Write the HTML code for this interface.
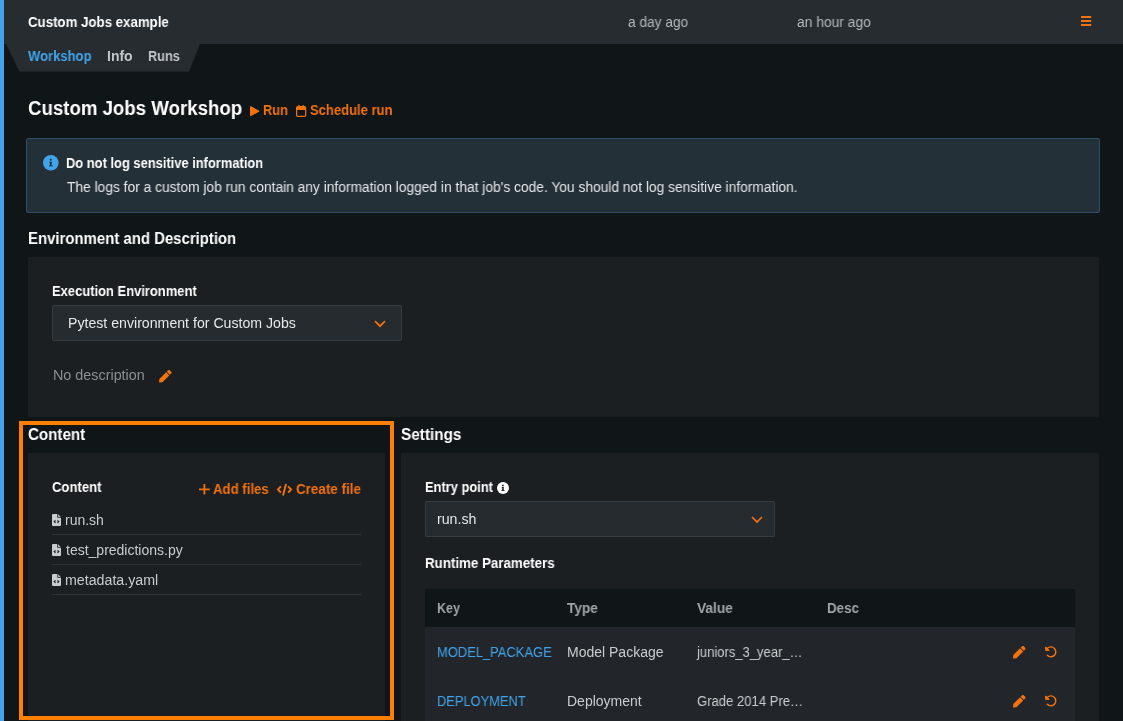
<!DOCTYPE html>
<html><head><meta charset="utf-8">
<style>
*{box-sizing:border-box;margin:0;padding:0}
html,body{width:1123px;height:721px;overflow:hidden;background:#101618}
body{font-family:"Liberation Sans",sans-serif;font-size:14px;color:#fff;position:relative}
.abs{position:absolute}
.t{position:absolute;white-space:nowrap;line-height:20px;height:20px;transform-origin:0 0;will-change:transform}
.b{font-weight:bold}
svg{position:absolute;overflow:visible}
</style></head><body>
<!-- left blue bar -->
<div class="abs" style="left:0;top:0;width:4px;height:721px;background:#41a4ea"></div>
<!-- header -->
<div class="abs" style="left:4px;top:0;width:1119px;height:44px;background:#272c31"></div>
<svg style="left:0;top:44px" width="210" height="28"><polygon points="4,0 200,0 189,27.5 19.5,27.5 6,0" fill="#272c31"/></svg>
<svg style="left:1081px;top:16px" width="10" height="10"><g fill="#f3720c"><rect x="0" y="0" width="10.2" height="2"/><rect x="0" y="4" width="10.2" height="2"/><rect x="0" y="8" width="10.2" height="2"/></g></svg>
<!-- run / schedule icons -->
<svg style="left:250px;top:105.8px" width="10" height="11"><polygon points="0.7,0.9 8.5,5.15 0.7,9.4" fill="#f3720c" stroke="#f3720c" stroke-width="1.4" stroke-linejoin="round"/></svg>
<svg style="left:296px;top:105px" width="10.3" height="12" viewBox="0 0 10.3 12"><rect x="0.6" y="1.7" width="9.1" height="9.7" rx="1.2" fill="none" stroke="#f3720c" stroke-width="1.2"/><path d="M0.6 5V2.9a1.2 1.2 0 0 1 1.2-1.2h6.7a1.2 1.2 0 0 1 1.2 1.2V5z" fill="#f3720c"/><rect x="2.3" y="0" width="1.5" height="2.4" rx="0.5" fill="#f3720c"/><rect x="6.5" y="0" width="1.5" height="2.4" rx="0.5" fill="#f3720c"/></svg>
<!-- info box -->
<div class="abs" style="left:26px;top:138px;width:1074px;height:75px;background:#243038;border:1px solid #2d4e66;border-radius:2px"></div>
<svg style="left:42.7px;top:155.2px" width="15.6" height="15.6" viewBox="0 0 15.6 15.6"><circle cx="7.8" cy="7.8" r="7.8" fill="#41a4ea"/><g fill="#253037"><circle cx="7.7" cy="4.8" r="1.05"/><rect x="6.3" y="6.8" width="2.4" height="1"/><rect x="6.9" y="6.8" width="1.8" height="4"/><rect x="6.1" y="10.3" width="3.5" height="1.1"/></g></svg>
<!-- env -->
<div class="abs" style="left:28px;top:257px;width:1071px;height:160px;background:#1b1f22;border-radius:2px"></div>
<div class="abs" style="left:52px;top:305px;width:350px;height:36px;background:#262b2f;border:1px solid #363b3f;border-radius:2px"></div>
<svg style="left:374px;top:320px" width="12" height="8"><polyline points="1,1.2 6,6.2 11,1.2" fill="none" stroke="#f3720c" stroke-width="1.7"/></svg>
<svg style="left:158.7px;top:369.8px" width="12.6" height="12.5" viewBox="0 0 512 512"><path d="M290.74 93.24l128.02 128.02-277.99 277.99-114.14 12.6C11.35 513.54-1.56 500.62.14 485.34l12.7-114.22 277.9-277.88zm207.2-19.06l-60.11-60.11c-18.75-18.75-49.16-18.75-67.91 0l-56.55 56.55 128.02 128.02 56.55-56.55c18.75-18.76 18.75-49.16 0-67.91z" fill="#f3720c"/></svg>
<!-- content / settings panels -->
<div class="abs" style="left:28px;top:453px;width:357px;height:280px;background:#1b1f22;border-radius:2px"></div>
<div class="abs" style="left:401px;top:453px;width:698px;height:280px;background:#1b1f22;border-radius:2px"></div>
<div class="abs" style="left:19px;top:420.5px;width:375px;height:299.5px;border:4px solid #ff8000"></div>
<!-- add files / create file icons -->
<svg style="left:199px;top:483.7px" width="11" height="11"><path d="M5.4 0v10.6M0 5.3h10.8" stroke="#f3720c" stroke-width="1.8" fill="none"/></svg>
<svg style="left:277px;top:484px" width="15" height="11" viewBox="0 0 15 11"><path d="M3.9 2.3L0.9 5.5l3 3.2M11.1 2.3l3 3.2-3 3.2M9 0L6 11.6" stroke="#f3720c" stroke-width="1.9" fill="none"/></svg>
<!-- file rows -->
<svg style="left:52px;top:514.3px" width="9" height="12" viewBox="0 0 9 12"><path d="M1 0h4.8L9 3.2V11a1 1 0 0 1-1 1H1a1 1 0 0 1-1-1V1a1 1 0 0 1 1-1z" fill="#c9cccf"/><path d="M5.6 0v3.4H9" fill="none" stroke="#1b1f22" stroke-width="0.8"/><path d="M3.5 6.5L2.3 7.6l1.2 1.1M5.5 6.5L6.7 7.6 5.5 8.7" fill="none" stroke="#1b1f22" stroke-width="1.2"/></svg>
<svg style="left:52px;top:544.3px" width="9" height="12" viewBox="0 0 9 12"><path d="M1 0h4.8L9 3.2V11a1 1 0 0 1-1 1H1a1 1 0 0 1-1-1V1a1 1 0 0 1 1-1z" fill="#c9cccf"/><path d="M5.6 0v3.4H9" fill="none" stroke="#1b1f22" stroke-width="0.8"/><path d="M3.5 6.5L2.3 7.6l1.2 1.1M5.5 6.5L6.7 7.6 5.5 8.7" fill="none" stroke="#1b1f22" stroke-width="1.2"/></svg>
<svg style="left:52px;top:574.3px" width="9" height="12" viewBox="0 0 9 12"><path d="M1 0h4.8L9 3.2V11a1 1 0 0 1-1 1H1a1 1 0 0 1-1-1V1a1 1 0 0 1 1-1z" fill="#c9cccf"/><path d="M5.6 0v3.4H9" fill="none" stroke="#1b1f22" stroke-width="0.8"/><path d="M3.5 6.5L2.3 7.6l1.2 1.1M5.5 6.5L6.7 7.6 5.5 8.7" fill="none" stroke="#1b1f22" stroke-width="1.2"/></svg>
<div class="abs" style="left:52px;top:534px;width:309px;height:1px;background:#2e3338"></div>
<div class="abs" style="left:52px;top:564px;width:309px;height:1px;background:#2e3338"></div>
<div class="abs" style="left:52px;top:594px;width:309px;height:1px;background:#2e3338"></div>
<!-- settings -->
<svg style="left:497px;top:481.9px" width="12" height="12" viewBox="0 0 12 12"><circle cx="6" cy="6" r="6" fill="#fff"/><g fill="#1b1f22"><circle cx="5.9" cy="3.5" r="0.9"/><rect x="4.7" y="5.2" width="2" height="0.9"/><rect x="5.2" y="5.2" width="1.5" height="3.4"/><rect x="4.5" y="8" width="3" height="0.9"/></g></svg>
<div class="abs" style="left:425px;top:501px;width:350px;height:36px;background:#262b2f;border:1px solid #363b3f;border-radius:2px"></div>
<svg style="left:751px;top:516px" width="12" height="8"><polyline points="1,1 6,6 11,1" fill="none" stroke="#f3720c" stroke-width="1.7"/></svg>
<div class="abs" style="left:425px;top:589px;width:650px;height:38px;background:#101618"></div>
<div class="abs" style="left:425px;top:627px;width:650px;height:100px;background:#22262a"></div>
<svg style="left:1012.7px;top:645.8px" width="12.5" height="12.5" viewBox="0 0 512 512"><path d="M290.74 93.24l128.02 128.02-277.99 277.99-114.14 12.6C11.35 513.54-1.56 500.62.14 485.34l12.7-114.22 277.9-277.88zm207.2-19.06l-60.11-60.11c-18.75-18.75-49.16-18.75-67.91 0l-56.55 56.55 128.02 128.02 56.55-56.55c18.75-18.76 18.75-49.16 0-67.91z" fill="#f3720c"/></svg><svg style="left:1044.8px;top:646.3px" width="11.6" height="11.6" viewBox="0 0 512 512"><path d="M106 99 A219 219 0 1 1 101 411" fill="none" stroke="#f3720c" stroke-width="64" stroke-linecap="round"/><path d="M30 40 L30 194 L184 194 Z" fill="#f3720c" stroke="#f3720c" stroke-width="44" stroke-linejoin="round"/></svg>
<svg style="left:1012.7px;top:694.8px" width="12.5" height="12.5" viewBox="0 0 512 512"><path d="M290.74 93.24l128.02 128.02-277.99 277.99-114.14 12.6C11.35 513.54-1.56 500.62.14 485.34l12.7-114.22 277.9-277.88zm207.2-19.06l-60.11-60.11c-18.75-18.75-49.16-18.75-67.91 0l-56.55 56.55 128.02 128.02 56.55-56.55c18.75-18.76 18.75-49.16 0-67.91z" fill="#f3720c"/></svg><svg style="left:1044.8px;top:695.3px" width="11.6" height="11.6" viewBox="0 0 512 512"><path d="M106 99 A219 219 0 1 1 101 411" fill="none" stroke="#f3720c" stroke-width="64" stroke-linecap="round"/><path d="M30 40 L30 194 L184 194 Z" fill="#f3720c" stroke="#f3720c" stroke-width="44" stroke-linejoin="round"/></svg>
<!-- texts -->
<div class="t b" style="left:27.83px;top:12px;color:#ffffff;transform:scaleX(0.9473)">Custom Jobs example</div>
<div class="t" style="left:627.67px;top:12px;color:#b4b8bb;transform:scaleX(0.9764)">a day ago</div>
<div class="t" style="left:796.58px;top:12px;color:#b4b8bb;transform:scaleX(0.9884)">an hour ago</div>
<div class="t b" style="left:27.65px;top:46px;color:#41a4ea;transform:scaleX(0.9303)">Workshop</div>
<div class="t b" style="left:106.68px;top:46px;color:#c3c6c8;transform:scaleX(0.9979)">Info</div>
<div class="t b" style="left:147.63px;top:46px;color:#c3c6c8;transform:scaleX(0.9084)">Runs</div>
<div class="t b" style="left:27.84px;top:96px;color:#ffffff;transform:scaleX(0.9324);font-size:20px;line-height:24px;height:24px">Custom Jobs Workshop</div>
<div class="t b" style="left:262.67px;top:100px;color:#f3720c;transform:scaleX(0.9135)">Run</div>
<div class="t b" style="left:309.55px;top:100px;color:#f3720c;transform:scaleX(0.9299)">Schedule run</div>
<div class="t b" style="left:65.61px;top:153px;color:#ffffff;transform:scaleX(0.9217)">Do not log sensitive information</div>
<div class="t" style="left:66.74px;top:177px;color:#e6e8e9;transform:scaleX(0.9846)">The logs for a custom job run contain any information logged in that job's code. You should not log sensitive information.</div>
<div class="t b" style="left:27.71px;top:229px;color:#ffffff;transform:scaleX(0.9331);font-size:16px">Environment and Description</div>
<div class="t b" style="left:51.51px;top:281px;color:#ffffff;transform:scaleX(0.9254)">Execution Environment</div>
<div class="t" style="left:67.74px;top:313px;color:#e6e8e9;transform:scaleX(1.0100)">Pytest environment for Custom Jobs</div>
<div class="t" style="left:53.27px;top:365px;color:#8b9094;transform:scaleX(1.0254)">No description</div>
<div class="t b" style="left:27.71px;top:425px;color:#ffffff;transform:scaleX(0.9478);font-size:16px">Content</div>
<div class="t b" style="left:400.63px;top:425px;color:#ffffff;transform:scaleX(0.9563);font-size:16px">Settings</div>
<div class="t b" style="left:51.84px;top:477px;color:#ffffff;transform:scaleX(0.9342)">Content</div>
<div class="t b" style="left:212.60px;top:479px;color:#f3720c;transform:scaleX(0.9423)">Add files</div>
<div class="t b" style="left:295.74px;top:479px;color:#f3720c;transform:scaleX(0.9582)">Create file</div>
<div class="t" style="left:64.59px;top:510px;color:#c9cccf;transform:scaleX(0.9969)">run.sh</div>
<div class="t" style="left:65.80px;top:540px;color:#c9cccf;transform:scaleX(1.0000)">test_predictions.py</div>
<div class="t" style="left:64.76px;top:570px;color:#c9cccf;transform:scaleX(1.0151)">metadata.yaml</div>
<div class="t b" style="left:424.61px;top:477px;color:#ffffff;transform:scaleX(0.9194)">Entry point</div>
<div class="t" style="left:436.77px;top:509px;color:#e6e8e9;transform:scaleX(1.0123)">run.sh</div>
<div class="t b" style="left:424.57px;top:553px;color:#ffffff;transform:scaleX(0.9514)">Runtime Parameters</div>
<div class="t b" style="left:436.53px;top:598px;color:#a1a6a9;transform:scaleX(0.8935)">Key</div>
<div class="t b" style="left:566.60px;top:598px;color:#a1a6a9;transform:scaleX(0.9772)">Type</div>
<div class="t b" style="left:696.60px;top:598px;color:#a1a6a9;transform:scaleX(0.9804)">Value</div>
<div class="t b" style="left:826.58px;top:598px;color:#a1a6a9;transform:scaleX(0.9517)">Desc</div>
<div class="t" style="left:436.71px;top:642px;color:#41a4ea;transform:scaleX(0.9233)">MODEL_PACKAGE</div>
<div class="t" style="left:566.72px;top:642px;color:#c9cccf;transform:scaleX(0.9971)">Model Package</div>
<div class="t" style="left:696.63px;top:642px;color:#c9cccf;transform:scaleX(0.9292)">juniors_3_year_…</div>
<div class="t" style="left:436.82px;top:691px;color:#41a4ea;transform:scaleX(0.9191)">DEPLOYMENT</div>
<div class="t" style="left:566.66px;top:691px;color:#c9cccf;transform:scaleX(0.9937)">Deployment</div>
<div class="t" style="left:696.77px;top:691px;color:#c9cccf;transform:scaleX(0.9346)">Grade 2014 Pre…</div>
</body></html>
